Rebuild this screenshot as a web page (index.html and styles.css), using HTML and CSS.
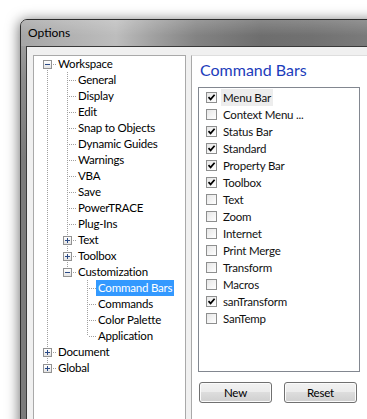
FILE: index.html
```html
<!DOCTYPE html>
<html lang="en">
<head>
    <meta charset="UTF-8">
    <meta name="viewport" content="width=device-width, initial-scale=1.0">
    <title>Options</title>
    <link rel="stylesheet" href="styles.css">
</head>
<body>
    <div class="window">
        <div class="titlebar">Options</div>
        <div class="client">
            <div class="tree">
                <div class="node"><span class="c first"><span class="exp minus"></span></span><span class="label">Workspace</span></div>
                <div class="node"><span class="c v"></span><span class="c tee"></span><span class="label">General</span></div>
                <div class="node"><span class="c v"></span><span class="c tee"></span><span class="label">Display</span></div>
                <div class="node"><span class="c v"></span><span class="c tee"></span><span class="label">Edit</span></div>
                <div class="node"><span class="c v"></span><span class="c tee"></span><span class="label">Snap to Objects</span></div>
                <div class="node"><span class="c v"></span><span class="c tee"></span><span class="label">Dynamic Guides</span></div>
                <div class="node"><span class="c v"></span><span class="c tee"></span><span class="label">Warnings</span></div>
                <div class="node"><span class="c v"></span><span class="c tee"></span><span class="label">VBA</span></div>
                <div class="node"><span class="c v"></span><span class="c tee"></span><span class="label">Save</span></div>
                <div class="node"><span class="c v"></span><span class="c tee"></span><span class="label">PowerTRACE</span></div>
                <div class="node"><span class="c v"></span><span class="c tee"></span><span class="label">Plug-Ins</span></div>
                <div class="node"><span class="c v"></span><span class="c tee"><span class="exp plus"></span></span><span class="label">Text</span></div>
                <div class="node"><span class="c v"></span><span class="c tee"><span class="exp plus"></span></span><span class="label">Toolbox</span></div>
                <div class="node"><span class="c v"></span><span class="c last"><span class="exp minus"></span></span><span class="label">Customization</span></div>
                <div class="node"><span class="c v"></span><span class="c"></span><span class="c tee"></span><span class="label selected">Command Bars</span></div>
                <div class="node"><span class="c v"></span><span class="c"></span><span class="c tee"></span><span class="label">Commands</span></div>
                <div class="node"><span class="c v"></span><span class="c"></span><span class="c tee"></span><span class="label">Color Palette</span></div>
                <div class="node"><span class="c v"></span><span class="c"></span><span class="c last"></span><span class="label">Application</span></div>
                <div class="node"><span class="c tee"><span class="exp plus"></span></span><span class="label">Document</span></div>
                <div class="node"><span class="c last"><span class="exp plus"></span></span><span class="label">Global</span></div>
            </div>
            <div class="page">
                <h1 class="heading">Command Bars</h1>
                <div class="listbox">
                    <div class="item"><span class="chk on"></span><span class="text focus">Menu Bar</span></div>
                    <div class="item"><span class="chk"></span><span class="text">Context Menu ...</span></div>
                    <div class="item"><span class="chk on"></span><span class="text">Status Bar</span></div>
                    <div class="item"><span class="chk on"></span><span class="text">Standard</span></div>
                    <div class="item"><span class="chk on"></span><span class="text">Property Bar</span></div>
                    <div class="item"><span class="chk on"></span><span class="text">Toolbox</span></div>
                    <div class="item"><span class="chk"></span><span class="text">Text</span></div>
                    <div class="item"><span class="chk"></span><span class="text">Zoom</span></div>
                    <div class="item"><span class="chk"></span><span class="text">Internet</span></div>
                    <div class="item"><span class="chk"></span><span class="text">Print Merge</span></div>
                    <div class="item"><span class="chk"></span><span class="text">Transform</span></div>
                    <div class="item"><span class="chk"></span><span class="text">Macros</span></div>
                    <div class="item"><span class="chk on"></span><span class="text">sanTransform</span></div>
                    <div class="item"><span class="chk"></span><span class="text">SanTemp</span></div>
                </div>
                <div class="buttons">
                    <button class="btn">New</button>
                    <button class="btn">Reset</button>
                </div>
            </div>
        </div>
    </div>
</body>
</html>
```
FILE: styles.css
```css
body {
    margin: 0;
    background: #fff;
    overflow: hidden;
    font-family: Lato, "Liberation Sans", sans-serif;
    font-size: 11.5px;
    letter-spacing: -0.2px;
    color: #000;
}

.window {
    margin: 19px 0 0 20px;
    width: 420px;
    height: 470px;
    border: 1px solid #2c2c2c;
    border-radius: 7px 0 0 0;
    background: linear-gradient(#a9a9a9 0, #8c8c8c 60px, #7b7b7b 140px, #7b7b7b 100%);
    box-shadow: -1px 1px 13px rgba(0, 0, 0, 0.55);
    overflow: hidden;
}

.titlebar {
    height: 26px;
    line-height: 26px;
    padding-left: 7px;
    background:
        linear-gradient(rgba(255, 255, 255, 0.18), rgba(255, 255, 255, 0) 60%),
        linear-gradient(to right, #a6a6a6 0, #b2b2b2 50px, #bdbdbd 95px, #a2a2a2 130px, #838383 175px, #6e6e6e 240px, #717171 290px, #7b7b7b 350px);
    font-size: 12px;
    letter-spacing: 0;
}

.client {
    margin-left: 5px;
    height: 100%;
    border-left: 1px solid #3a3a3a;
    border-top: 1px solid #3a3a3a;
    background: #f0f0f0;
    padding: 8px 0 0 6px;
    display: flex;
    gap: 5px;
}

.tree {
    width: 149px;
    flex: none;
    background: #fff;
    border: 1px solid #a9a9a9;
    padding-left: 2px;
}

.node {
    display: flex;
    height: 16px;
    line-height: 16px;
    white-space: nowrap;
}

/* tree gutter cell: lines drawn with dotted gradients */
.c {
    display: block;
    width: 20px;
    height: 16px;
    flex: none;
    background-repeat: no-repeat;
}

.c.v {
    background-image: repeating-linear-gradient(#a0a0a0 0 1px, transparent 1px 2px);
    background-size: 1px 16px;
    background-position: 11px 0;
}

.c.tee {
    background-image:
        repeating-linear-gradient(#a0a0a0 0 1px, transparent 1px 2px),
        repeating-linear-gradient(to right, #a0a0a0 0 1px, transparent 1px 2px);
    background-size: 1px 16px, 8px 1px;
    background-position: 11px 0, 13px 8px;
}

.c.last {
    background-image:
        repeating-linear-gradient(#a0a0a0 0 1px, transparent 1px 2px),
        repeating-linear-gradient(to right, #a0a0a0 0 1px, transparent 1px 2px);
    background-size: 1px 8px, 8px 1px;
    background-position: 11px 0, 13px 8px;
}

.c.first {
    background-image:
        repeating-linear-gradient(#a0a0a0 0 1px, transparent 1px 2px),
        repeating-linear-gradient(to right, #a0a0a0 0 1px, transparent 1px 2px);
    background-size: 1px 8px, 8px 1px;
    background-position: 11px 8px, 13px 8px;
}

.exp {
    display: block;
    box-sizing: border-box;
    width: 9px;
    height: 9px;
    margin: 4px 0 0 7px;
    border: 1px solid #929292;
    background-color: #fff;
    background-repeat: no-repeat;
}

.exp.minus {
    background-image:
        linear-gradient(#2b4a86, #2b4a86),
        linear-gradient(#fff, #e4e4e4);
    background-size: 5px 1px, 100% 100%;
    background-position: 1px 3px, 0 0;
}

.exp.plus {
    background-image:
        linear-gradient(#2b4a86, #2b4a86),
        linear-gradient(#2b4a86, #2b4a86),
        linear-gradient(#fff, #e4e4e4);
    background-size: 5px 1px, 1px 5px, 100% 100%;
    background-position: 1px 3px, 3px 1px, 0 0;
}

.label {
    padding: 0 2px;
    height: 16px;
}

.label.selected {
    background: #3399ff;
    color: #fff;
}

.page {
    flex: 1;
    background: #fff;
    border-left: 1px solid #a9a9a9;
    border-top: 1px solid #dedede;
    padding: 4px 0 0 6px;
}

.heading {
    margin: 0 0 7px 2px;
    font-size: 16px;
    line-height: 20px;
    letter-spacing: 0;
    font-weight: normal;
    color: #1c3cbb;
}

.listbox {
    box-sizing: border-box;
    width: 162px;
    height: 285px;
    border: 1px solid #828790;
    padding-top: 1px;
}

.item {
    display: flex;
    align-items: center;
    height: 17px;
    padding-left: 7px;
    color: #111;
}

.chk {
    box-sizing: border-box;
    width: 11px;
    height: 11px;
    border: 1px solid #8e8f8f;
    background: linear-gradient(135deg, #e6e6e6, #fff);
    flex: none;
}

.chk.on {
    background:
        url("data:image/svg+xml;utf8,<svg xmlns='http://www.w3.org/2000/svg' width='9' height='9'><path d='M1.5 4.2 L3.6 6.4 L7.6 1.8' fill='none' stroke='black' stroke-width='1.7'/></svg>") no-repeat 0 0,
        linear-gradient(135deg, #e6e6e6, #fff);
}

.text {
    margin-left: 4px;
    padding: 0 2px;
    line-height: 17px;
}

.text.focus {
    background: #ededed;
}

.buttons {
    display: flex;
    gap: 12px;
    margin: 10px 0 0 1px;
}

.btn {
    width: 73px;
    height: 21px;
    padding: 0;
    border: 1px solid #707070;
    border-radius: 3px;
    background: linear-gradient(#f2f2f2, #ebebeb 50%, #dddddd 50%, #cfcfcf);
    box-shadow: inset 0 0 0 1px #fbfbfb;
    font-family: Lato, "Liberation Sans", sans-serif;
    font-size: 11.5px;
    letter-spacing: -0.2px;
    color: #000;
}
```
